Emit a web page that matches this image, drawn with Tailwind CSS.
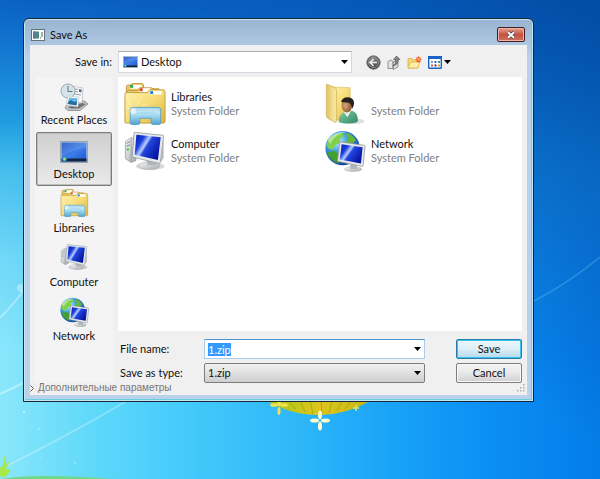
<!DOCTYPE html>
<html lang="en">
<head>
  <meta charset="UTF-8" />
  <meta name="viewport" content="width=device-width, initial-scale=1.0">
  <title>Save As</title>
  <script src="https://cdn.jsdelivr.net/npm/@tailwindcss/browser@4"></script>
</head>
<body class="relative min-h-screen overflow-hidden bg-[#1aa0f5] font-[Lato,'Liberation_Sans',sans-serif] text-[11px] leading-[14px] text-[#111]">

  <!-- Icon set -->
  <svg class="absolute h-0 w-0" aria-hidden="true">
    <defs>
      <linearGradient id="gold" x1="0" y1="0" x2="1" y2="1"><stop offset="0" stop-color="#fff2b0"/><stop offset=".5" stop-color="#f6dc78"/><stop offset="1" stop-color="#dcb33e"/></linearGradient>
      <linearGradient id="goldSide" x1="0" y1="0" x2="1" y2="0"><stop offset="0" stop-color="#e4c25e"/><stop offset="1" stop-color="#fbeeb0"/></linearGradient>
      <linearGradient id="glass" x1="0" y1="0" x2="0" y2="1"><stop offset="0" stop-color="#8ccbea"/><stop offset=".4" stop-color="#b0dff2"/><stop offset="1" stop-color="#4fa4d2"/></linearGradient>
      <linearGradient id="screen" x1="0" y1="0" x2="1" y2=".6"><stop offset="0" stop-color="#0b1cae"/><stop offset=".3" stop-color="#1a3fe0"/><stop offset=".46" stop-color="#b9d0ff"/><stop offset=".55" stop-color="#2446e0"/><stop offset="1" stop-color="#0414a0"/></linearGradient>
      <linearGradient id="metal" x1="0" y1="0" x2="1" y2="1"><stop offset="0" stop-color="#f8f9fa"/><stop offset="1" stop-color="#a4a9ae"/></linearGradient>
      <linearGradient id="desk" x1="0" y1="0" x2="1" y2="1"><stop offset="0" stop-color="#1d50c4"/><stop offset=".5" stop-color="#3d7ee8"/><stop offset="1" stop-color="#1c55cf"/></linearGradient>
      <radialGradient id="globe" cx=".35" cy=".3" r=".75"><stop offset="0" stop-color="#c4f0ff"/><stop offset=".4" stop-color="#3f9fe4"/><stop offset="1" stop-color="#0a3c98"/></radialGradient>
      <radialGradient id="head" cx=".35" cy=".5" r=".7"><stop offset="0" stop-color="#d9a674"/><stop offset="1" stop-color="#7c4c28"/></radialGradient>
      <linearGradient id="shirt" x1="0" y1="0" x2="1" y2="1"><stop offset="0" stop-color="#8cc9a8"/><stop offset="1" stop-color="#2b8a62"/></linearGradient>
      <radialGradient id="knob" cx=".5" cy=".3" r=".7"><stop offset="0" stop-color="#8b8b8b"/><stop offset="1" stop-color="#333"/></radialGradient>
    </defs>

    <symbol id="i-libraries" viewBox="0 0 44 44">
      <path d="M3 40V4q0-2 2-2h3l1-1.500h10q2 0 2 2V6h16v32z" fill="#e8c75c" stroke="#b08a30" stroke-width=".8"/>
      <rect x="7" y="2" width="12" height="4" fill="#fff"/><rect x="7" y="2" width="3" height="3" fill="#2f9e4a"/>
      <path d="M3 40V9l2-1h10l2-3h12q2 0 2 3h8v32z" fill="#f2d878" stroke="#b08a30" stroke-width=".8"/>
      <rect x="17" y="5.500" width="11" height="4" fill="#fff"/><rect x="17" y="5.500" width="3" height="3" fill="#e03a24"/>
      <path d="M1.500 41V12q0-2 2-2H25l2.500-3H41q2.500 0 2.500 2.500V40q0 2-2 2H3q-1.500 0-1.500-1z" fill="url(#gold)" stroke="#ba9338" stroke-width=".9"/>
      <rect x="28" y="8.500" width="12" height="3.500" fill="#fff"/><rect x="28" y="8.500" width="3" height="3" fill="#1f7ee0"/>
      <path d="M10 29 4 16M10 29 19 14M10 29 2 25M10 29 24 22" stroke="#fffbe0" stroke-width=".7" opacity=".7"/>
      <path d="M7 42V28q0-2.500 3-2.500h26q3 0 3 2.500v14q0 1.500-2 1.500h-6q-2 0-2-1.500v-5H17v5q0 1.500-2 1.500H9q-2 0-2-1.500z" fill="url(#glass)" stroke="#4b9cc6" stroke-width=".8"/>
      <path d="M8 33q13-5 30-1v-4q0-1.500-2-1.500H10q-2 0-2 1.500z" fill="#fff" opacity=".3"/>
      <circle cx="10" cy="29" r="3" fill="#fff" opacity=".6"/>
    </symbol>

    <symbol id="i-computer" viewBox="0 0 44 44">
      <ellipse cx="28" cy="38" rx="15" ry="4" fill="#000" opacity=".15"/>
      <path d="M2 12 8 8l5 1v23l-5 2-6-4z" fill="url(#metal)" stroke="#8b9095" stroke-width=".7"/>
      <path d="M8 9v24" stroke="#8b9095" stroke-width=".7"/>
      <path d="M3 14l4-2M3 17l4-1.500" stroke="#666" stroke-width=".8"/><circle cx="4.500" cy="20.500" r="1.300" fill="#4ccf2c"/>
      <ellipse cx="27" cy="37.500" rx="11" ry="4" fill="url(#metal)" stroke="#a5a9ad" stroke-width=".6"/>
      <path d="M24 29h9l1 8h-9z" fill="#b3b7bb"/>
      <path d="M12 2.500 41 5.500q1 0 1 1L38.500 34q0 1.500-1.500 1L10 28.500q-1-.3-.8-1.500L11 3.500q0-1 1-1z" fill="#e6e9ec" stroke="#8f9498" stroke-width=".8"/>
      <path d="M13.500 5 39 7.600 36 31.500 11.700 26z" fill="url(#screen)"/>
      <path d="M42 7v22l-3 5z" fill="#aeb3b7"/>
    </symbol>

    <symbol id="i-network" viewBox="0 0 44 44">
      <circle cx="20" cy="19" r="18" fill="url(#globe)"/>
      <path d="M5 10Q11 3 20 3l1 4-4 2 1 4-6 3-2 5-5-2-2-3z" fill="#7fd04b"/>
      <path d="M23 3q8 2 11 8l-5 4-6-2 3-4z" fill="#65b83a"/>
      <path d="M5 23l7-1 5 5-1 8q-8-2-12-10z" fill="#43a02e"/>
      <path d="M4 10Q12 1 24 2 12 4 7 15z" fill="#fff" opacity=".4"/>
      <ellipse cx="31" cy="41" rx="9" ry="2.500" fill="url(#metal)" stroke="#a5a9ad" stroke-width=".5"/>
      <path d="M28 35h7v6h-7z" fill="#b3b7bb"/>
      <path d="M18 12.500 42.500 16q1 .2 1 1L41.500 37q0 1.200-1.500 1L15.500 33q-1-.2-.8-1.200L17 13.200q.2-.8 1-.7z" fill="#e6e9ec" stroke="#8f9498" stroke-width=".8"/>
      <path d="M19 15 41 18l-1.800 17L17 31z" fill="url(#screen)"/>
    </symbol>

    <symbol id="i-user" viewBox="0 0 44 44">
      <ellipse cx="30" cy="40" rx="13" ry="3" fill="#000" opacity=".13"/>
      <path d="M8 4 28 5v34H14z" fill="url(#gold)" stroke="#d4b765" stroke-width=".6"/>
      <path d="M3 2q0-1 1-.7L12 5q1.500.7 1.500 2.500V40q0 2-1.500 1.200L4.500 37Q3 36 3 34z" fill="url(#goldSide)" stroke="#cba94e" stroke-width=".7"/>
      <path d="M16 41q-1-9 8-11l6-1q6 2 6 10 0 2-2 2.500-9 2-18-.500z" fill="url(#shirt)"/>
      <path d="m21 30 4 6 4-7z" fill="#e9f4ec"/>
      <ellipse cx="24.500" cy="23.500" rx="5.500" ry="7.500" fill="url(#head)"/>
      <path d="M18.500 20q1-5 7-5 6.500.5 6.500 6 0 4-2 6-.500-6-5-6.500z" fill="#26211f"/>
    </symbol>

    <symbol id="i-desktop" viewBox="0 0 28 22">
      <rect x=".5" y=".5" width="27" height="21" fill="#d8dfe8" stroke="#9aa4ae"/>
      <rect x="1.500" y="1.500" width="25" height="19" fill="url(#desk)"/>
      <path d="M2 2h24v5Q12 8 2 16z" fill="#fff" opacity=".12"/>
      <rect x="1.500" y="17.500" width="25" height="3" fill="#12233d"/>
      <circle cx="4.500" cy="18" r="2.300" fill="#37a6d8"/><path d="M3.500 17h2v2h-2z" fill="#b3e06b"/>
    </symbol>

    <symbol id="i-recent" viewBox="0 0 28 28">
      <path d="M5 25 9 18h16l3 3-8 6.500H8z" fill="#c1c4c6" stroke="#777b7e" stroke-width=".7"/>
      <path d="m8 24 14-4 4 1-7 4.500H10z" fill="#6f7376"/>
      <path d="M12 3l11 2-1 15-12-2z" fill="#f9fafb" stroke="#a9adb0" stroke-width=".6"/>
      <path d="M15 6l3 .4M15 8.500l3 .4M14 11l7 1" stroke="#8d99a5"/><path d="m19 6 2.500.4v3L19 9z" fill="#596979"/>
      <circle cx="8" cy="8" r="7" fill="#d4e2ea" fill-opacity=".9" stroke="#96a7b2"/>
      <path d="M8 3v5.500h4.500" fill="none" stroke="#5e6d78"/>
      <path d="m8 13 11 1-1 10-12-2z" fill="#fff" stroke="#aab0b4" stroke-width=".5"/>
      <path d="m9 14.500 8.500.8-.8 6.700-9-1z" fill="#64b8ea"/><path d="m8 19 3-2 3 2 3-1-.5 4.500L7.500 21z" fill="#286e98"/>
    </symbol>
  </svg>

  <!-- Wallpaper -->
  <svg class="absolute inset-0 h-full w-full" viewBox="0 0 600 479" preserveAspectRatio="xMidYMid slice" aria-hidden="true">
    <defs>
      <linearGradient id="sky" x1="0" y1="0" x2="1" y2="0">
        <stop offset="0" stop-color="#8ae7fb"/><stop offset=".17" stop-color="#5cd7fa"/><stop offset=".33" stop-color="#41c8fa"/>
        <stop offset=".5" stop-color="#2eb6f9"/><stop offset=".67" stop-color="#17a1f8"/><stop offset=".83" stop-color="#0a8df4"/><stop offset="1" stop-color="#047de8"/>
      </linearGradient>
      <linearGradient id="dusk" x1="0" y1="0" x2="0" y2="1">
        <stop offset="0" stop-color="#0c64c6"/><stop offset=".1" stop-color="#0f74d0" stop-opacity=".97"/><stop offset=".25" stop-color="#1290dc" stop-opacity=".88"/>
        <stop offset=".36" stop-color="#1ca4e4" stop-opacity=".6"/><stop offset=".54" stop-color="#20a4ea" stop-opacity=".22"/><stop offset=".73" stop-color="#20a4ea" stop-opacity="0"/>
      </linearGradient>
      <linearGradient id="corner" gradientUnits="userSpaceOnUse" x1="420" y1="330" x2="620" y2="30">
        <stop offset="0" stop-color="#0456b8" stop-opacity="0"/><stop offset=".5" stop-color="#0456b8" stop-opacity=".6"/><stop offset="1" stop-color="#024da4" stop-opacity=".97"/>
      </linearGradient>
      <linearGradient id="leaf" x1="0" y1="0" x2="1" y2="0"><stop offset="0" stop-color="#a2c71c"/><stop offset=".5" stop-color="#e0c41c"/><stop offset="1" stop-color="#c5b617"/></linearGradient>
    </defs>
    <rect width="600" height="479" fill="url(#sky)"/>
    <rect width="600" height="479" fill="url(#dusk)"/>
    <rect width="600" height="479" fill="url(#corner)"/>
    <path d="M0 469Q60 440 125 402" fill="none" stroke="#fff" stroke-width="2" opacity=".28"/>
    <path d="M0 394 23 383" stroke="#fff" stroke-width="2" opacity=".4"/>
    <path d="M0 318Q14 304 23 291" fill="none" stroke="#fff" stroke-width="2" opacity=".35"/>
    <circle cx="21" cy="288" r="4" fill="#fff" opacity=".35"/>
    <path d="M534 301Q570 282 600 257" fill="none" stroke="#7fd8ff" stroke-width="1.500" opacity=".3"/>
    <g fill="#fff" opacity=".6"><circle cx="24" cy="412" r="1"/><circle cx="43" cy="418" r=".6"/><circle cx="30" cy="428" r=".6"/><circle cx="39" cy="429" r=".8"/><circle cx="75" cy="463" r=".8"/><circle cx="41" cy="457" r=".6"/></g>
    <path d="M266 400q22 14 50 15t56-15z" fill="url(#leaf)"/>
    <path d="m288 401 8 8m4-8 5 11m5-11 3 13m8-13 1 13m10-13-3 12m13-12-5 10m14-10-6 8" stroke="#86ad12" stroke-width="1" opacity=".7"/>
    <g fill="#f4e34c"><ellipse cx="279" cy="402" rx="2" ry="4"/><ellipse cx="279" cy="411" rx="1.500" ry="4"/><ellipse cx="274" cy="405" rx="4" ry="1.800"/><ellipse cx="284" cy="405" rx="4" ry="1.800"/></g>
    <g fill="#fffbd0"><ellipse cx="320" cy="415" rx="2" ry="4.500"/><ellipse cx="320" cy="426" rx="2" ry="4.500"/><ellipse cx="314.500" cy="420.500" rx="4.500" ry="2"/><ellipse cx="325.500" cy="420.500" rx="4.500" ry="2"/></g>
    <path d="M356 405v6m-3-3h6" stroke="#d6e864" stroke-width="1.500"/>
    <path d="M0 467q3 2 4-8 1-5 1-4 2 4 0 10l5-4q-2 6-6 8 7-1 6 2-5 9-10 5z" fill="#a5e94a"/>
    <path d="M0 479q35-6 115 0z" fill="#6fd78a"/>
  </svg>

  <!-- Dialog -->
  <form class="relative mt-[18px] mr-[66px] ml-[23px] rounded-t-[6px] border border-[#162838] bg-linear-to-b from-[#98b4d0] via-[#b9d1ea] via-10% to-[#b9d1ea] px-[6px] pb-[6px] shadow-[inset_0_0_0_1px_#c8e6f4,inset_-1px_-1px_0_1px_#68cfdf]">
    <header class="flex h-[26px] items-center pt-[5px] pr-[2px] pl-[1px]">
      <svg class="h-3 w-3.5" viewBox="0 0 14 12" aria-hidden="true"><rect x=".5" y=".5" width="13" height="11" fill="#fff" stroke="#66717b"/><rect x="2" y="2.500" width="6" height="7" fill="#438f7b"/><path d="M2 2.500h3v7H2z" fill="#6874a8"/><path d="M9 9h1m1-6v5" stroke="#555"/></svg>
      <h1 class="ml-[5px] flex-1 text-[11px]">Save As</h1>
      <button type="button" aria-label="Close" class="flex h-[15px] w-7 items-center justify-center rounded-[2px] border border-[#4a1c22] bg-linear-to-b from-[#e3a596] via-[#c8503f] to-[#d07160] shadow-[inset_0_0_0_1px_#e9b5aa]">
        <svg class="h-2 w-2.5" viewBox="0 0 10 8"><path d="m2 1.200 6 5.600m0-5.600L2 6.800" stroke="#51434b" stroke-width="3.600"/><path d="m2 1.200 6 5.600m0-5.600L2 6.800" stroke="#fff" stroke-width="2"/></svg>
      </button>
    </header>

    <div class="bg-[#f0f0f0] px-[5px] pt-[6px]">
      <div class="flex items-center">
        <label for="folder" class="w-[83px] pr-[6px] text-right">Save in:</label>
        <div class="relative h-[22px] w-[234px]">
          <select id="folder" class="h-full w-full appearance-none border border-[#d5d9e4] border-t-[#abadb3] bg-white pl-[22px]">
            <option>Desktop</option>
          </select>
          <svg class="pointer-events-none absolute top-[5px] left-[5px] h-3 w-[15px]"><use href="#i-desktop"/></svg>
          <svg class="pointer-events-none absolute top-[9px] right-1 h-1 w-[7px]" viewBox="0 0 7 4"><path d="M0 0h7L3.500 4z"/></svg>
        </div>
        <div class="ml-[14px] flex items-center gap-[6px]">
          <button type="button" aria-label="Back"><svg class="h-[15px] w-[15px]" viewBox="0 0 15 15"><circle cx="7.500" cy="7.500" r="6.700" fill="url(#knob)" stroke="#777"/><circle cx="7.500" cy="7.500" r="5" fill="none" stroke="#aaa" stroke-width=".8"/><path d="M7.500 4 4 7.500 7.500 11M4.300 7.500H11" fill="none" stroke="#eee" stroke-width="1.600"/></svg></button>
          <button type="button" aria-label="Up one level"><svg class="h-[15px] w-[14px]" viewBox="0 0 14 15"><path d="M1 6.500 4 5l2 1.500v7H1zM6 7l5-2v7l-5 2.500z" fill="#e3e3e3" stroke="#888" stroke-width=".9"/><path d="M6 11q3.500-2.500 2.500-6.500H6.500l3-3.500L13 4.500h-2q.8 5-5 6.500z" fill="#888" stroke="#444" stroke-width=".6"/></svg></button>
          <button type="button" aria-label="New folder"><svg class="h-[15px] w-[15px]" viewBox="0 0 15 15"><path d="M1 13V3.500h4l1 1.500h5v8z" fill="#f5d777" stroke="#d9ae42" stroke-width=".8"/><path d="M1 13 3.500 7H13l-2.500 6z" fill="#fdeea8" stroke="#dcb54a" stroke-width=".8"/><path d="M11.500 1.500v6M8.500 4.500h6M9.500 2.500l4 4m0-4-4 4" stroke="#f4552a" stroke-width="1.200"/><circle cx="11.500" cy="4.500" r="1.200" fill="#ffb36a"/></svg></button>
          <button type="button" aria-label="View menu" class="flex items-center gap-[2px]">
            <svg class="h-[13px] w-[14px]" viewBox="0 0 14 13"><rect x=".7" y=".7" width="12.600" height="11.600" rx=".8" fill="#fff" stroke="#1763c8" stroke-width="1.400"/><path d="M0 0h14v3H0z" fill="#1763c8"/><path d="M3 5h2v2H3z" fill="#8a94c8"/><path d="M6.500 5h2v2h-2z" fill="#3f62c8"/><path d="M10 5h2v2h-2z" fill="#3a9a58"/><path d="M3 8.500h2v2H3z" fill="#e45a38"/><path d="M6.500 8.500h2v2h-2z" fill="#23358c"/><path d="M10 8.500h2v2h-2z" fill="#d39a35"/></svg>
            <svg class="h-1 w-[7px]" viewBox="0 0 7 4"><path d="M0 0h7L3.500 4z"/></svg>
          </button>
        </div>
      </div>

      <div class="mt-1 flex gap-[5px]">
        <nav class="flex w-[78px] shrink-0 flex-col bg-[#f4f4f4] px-px pt-px pb-[29px]">
          <a href="#" class="flex h-[54px] flex-col items-center justify-end pb-[5px]"><svg class="h-7 w-7"><use href="#i-recent"/></svg><span class="mt-[2px] whitespace-nowrap">Recent Places</span></a>
          <a href="#" class="flex h-[54px] flex-col items-center justify-end rounded-[2px] border border-[#7c7c7c] bg-linear-to-b from-[#d0d0d0] to-[#eaeaea] pb-1 shadow-[inset_0_0_0_1px_#bdbdbd]"><svg class="h-[22px] w-7"><use href="#i-desktop"/></svg><span class="mt-1">Desktop</span></a>
          <a href="#" class="flex h-[54px] flex-col items-center justify-end pb-[5px]"><svg class="h-7 w-[30px]"><use href="#i-libraries"/></svg><span class="mt-1">Libraries</span></a>
          <a href="#" class="flex h-[54px] flex-col items-center justify-end pb-[5px]"><svg class="h-7 w-7"><use href="#i-computer"/></svg><span class="mt-1">Computer</span></a>
          <a href="#" class="flex h-[54px] flex-col items-center justify-end pb-[5px]"><svg class="h-[30px] w-[30px]"><use href="#i-network"/></svg><span class="mt-[2px]">Network</span></a>
        </nav>

        <div class="flex min-w-0 flex-1 flex-col">
          <ul class="grid h-[254px] grid-cols-[200px_1fr] content-start gap-y-[5px] bg-white pt-[6px] pl-[5px]">
            <li class="flex items-center gap-[5px]"><svg class="h-[42px] w-[43px]"><use href="#i-libraries"/></svg><p>Libraries<br><span class="text-[#808080]">System Folder</span></p></li>
            <li class="flex items-center gap-[5px]"><svg class="h-[42px] w-[43px]"><use href="#i-user"/></svg><p>&nbsp;<br><span class="text-[#808080]">System Folder</span></p></li>
            <li class="flex items-center gap-[5px]"><svg class="h-[42px] w-[43px]"><use href="#i-computer"/></svg><p>Computer<br><span class="text-[#808080]">System Folder</span></p></li>
            <li class="flex items-center gap-[5px]"><svg class="h-[42px] w-[43px]"><use href="#i-network"/></svg><p>Network<br><span class="text-[#808080]">System Folder</span></p></li>
          </ul>

          <div class="mt-2 flex items-center">
            <label for="fileName" class="w-[86px] pl-[2px]">File name:</label>
            <div class="relative h-5 flex-1">
              <input id="fileName" type="text" value="1.zip" class="h-full w-full border border-[#a9cdea] border-t-[#4f93c8] bg-white px-[3px] outline-none selection:bg-[#3399ff] selection:text-white">
              <svg class="pointer-events-none absolute top-2 right-1 h-1 w-[7px]" viewBox="0 0 7 4"><path d="M0 0h7L3.500 4z"/></svg>
            </div>
            <button type="submit" class="ml-[31px] h-5 w-[66px] rounded-[2px] border border-[#2c7aa8] bg-linear-to-b from-[#edf7fc] via-[#dceef7] to-[#b5d9ec] shadow-[inset_0_0_0_1px_#35c4ee]">Save</button>
          </div>
          <div class="mt-1 flex items-center">
            <label for="fileType" class="w-[86px] pl-[2px]">Save as type:</label>
            <div class="relative h-5 flex-1">
              <select id="fileType" class="h-full w-full appearance-none rounded-[2px] border border-[#7d7d7d] bg-linear-to-b from-[#f2f2f2] to-[#cecece] px-[3px]">
                <option>1.zip</option>
              </select>
              <svg class="pointer-events-none absolute top-2 right-1 h-1 w-[7px]" viewBox="0 0 7 4"><path d="M0 0h7L3.500 4z"/></svg>
            </div>
            <button type="button" class="ml-[31px] h-5 w-[66px] rounded-[2px] border border-[#7d7d7d] bg-linear-to-b from-[#f4f4f4] via-[#e8e8e8] to-[#cfcfcf] shadow-[inset_0_0_0_1px_#f8f8f8]">Cancel</button>
          </div>
        </div>
      </div>

      <footer class="-mx-[5px] -mt-[2px] flex h-[14px] items-center justify-between pr-[2px]">
        <button type="button" class="flex items-center gap-1 font-['Liberation_Sans',sans-serif] text-[10px] leading-3 text-[#777]">
          <svg class="h-[7px] w-1" viewBox="0 0 4 7"><path d="m.5.5 3 3-3 3" fill="none" stroke="#666"/></svg>
          Дополнительные параметры
        </button>
        <svg class="h-2 w-2" viewBox="0 0 8 8" fill="#aaa" aria-hidden="true"><path d="M6 0h1.500v1.500H6zM6 3h1.500v1.500H6zM3 3h1.500v1.500H3zM6 6h1.500v1.500H6zM3 6h1.500v1.500H3zM0 6h1.500v1.500H0z"/></svg>
      </footer>
    </div>
  </form>

  <script>
    const fileName = document.getElementById("fileName");
    fileName.focus();
    fileName.select();
  </script>
</body>
</html>
